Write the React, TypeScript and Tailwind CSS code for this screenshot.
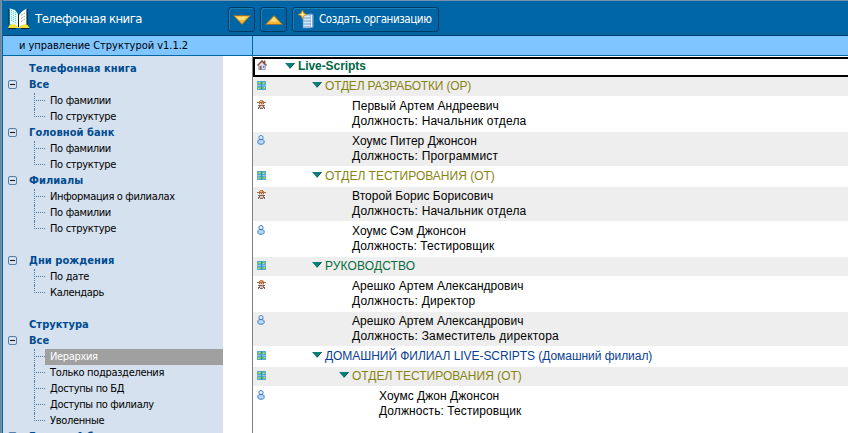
const ui = "font-['DejaVu_Sans_Condensed','DejaVu_Sans',sans-serif]";

type NavItem = { label?: string; kind: 'head' | 'group' | 'item' | 'blank'; last?: boolean; selected?: boolean };

const nav: NavItem[] = [
  { kind: 'head', label: 'Телефонная книга' },
  { kind: 'group', label: 'Все' },
  { kind: 'item', label: 'По фамилии' },
  { kind: 'item', label: 'По структуре', last: true },
  { kind: 'group', label: 'Головной банк' },
  { kind: 'item', label: 'По фамилии' },
  { kind: 'item', label: 'По структуре', last: true },
  { kind: 'group', label: 'Филиалы' },
  { kind: 'item', label: 'Информация о филиалах' },
  { kind: 'item', label: 'По фамилии' },
  { kind: 'item', label: 'По структуре', last: true },
  { kind: 'blank' },
  { kind: 'group', label: 'Дни рождения' },
  { kind: 'item', label: 'По дате' },
  { kind: 'item', label: 'Календарь', last: true },
  { kind: 'blank' },
  { kind: 'head', label: 'Структура' },
  { kind: 'group', label: 'Все' },
  { kind: 'item', label: 'Иерархия', selected: true },
  { kind: 'item', label: 'Только подразделения' },
  { kind: 'item', label: 'Доступы по БД' },
  { kind: 'item', label: 'Доступы по филиалу' },
  { kind: 'item', label: 'Уволенные', last: true },
  { kind: 'group', label: 'Головной банк' },
];

type Row =
  | { kind: 'org'; label: string; color: string; pad: string; track?: string; shade?: boolean }
  | { kind: 'person'; icon: 'boss' | 'user'; name: string; job: string; pad: string; track?: string; shade?: boolean };

const rows: Row[] = [
  { kind: 'org', label: 'ОТДЕЛ РАЗРАБОТКИ (ОР)', color: 'text-[#898410]', pad: 'pl-[59px]', track: 'tracking-[-0.18px]', shade: true },
  { kind: 'person', icon: 'boss', name: 'Первый Артем Андреевич', job: 'Начальник отдела', pad: 'pl-[99px]' },
  { kind: 'person', icon: 'user', name: 'Хоумс Питер Джонсон', job: 'Программист', pad: 'pl-[99px]', shade: true },
  { kind: 'org', label: 'ОТДЕЛ ТЕСТИРОВАНИЯ (ОТ)', color: 'text-[#898410]', pad: 'pl-[59px]' },
  { kind: 'person', icon: 'boss', name: 'Второй Борис Борисович', job: 'Начальник отдела', pad: 'pl-[99px]', shade: true },
  { kind: 'person', icon: 'user', name: 'Хоумс Сэм Джонсон', job: 'Тестировщик', pad: 'pl-[99px]', track: 'tracking-[0.08px]' },
  { kind: 'org', label: 'РУКОВОДСТВО', color: 'text-[#086c3c]', pad: 'pl-[59px]', track: 'tracking-[0.12px]', shade: true },
  { kind: 'person', icon: 'boss', name: 'Арешко Артем Александрович', job: 'Директор', pad: 'pl-[99px]' },
  { kind: 'person', icon: 'user', name: 'Арешко Артем Александрович', job: 'Заместитель директора', pad: 'pl-[99px]', shade: true },
  { kind: 'org', label: 'ДОМАШНИЙ ФИЛИАЛ LIVE-SCRIPTS (Домашний филиал)', color: 'text-[#0b4090]', pad: 'pl-[59px]', track: 'tracking-[-0.05px]' },
  { kind: 'org', label: 'ОТДЕЛ ТЕСТИРОВАНИЯ (ОТ)', color: 'text-[#898410]', pad: 'pl-[86px]', shade: true },
  { kind: 'person', icon: 'user', name: 'Хоумс Джон Джонсон', job: 'Тестировщик', pad: 'pl-[126px]', track: 'tracking-[0.08px]' },
];

function Twisty() {
  return (
    <svg width="10" height="6" viewBox="0 0 10 6" className="shrink-0">
      <path d="M0 0H10L5 5.8Z" fill="#087f7b" />
      <path d="M9.6 0.2L5 5.3" stroke="#123c38" strokeWidth="0.8" fill="none" />
    </svg>
  );
}

function House() {
  return (
    <svg width="10" height="10" viewBox="0 0 11 11">
      <path d="M2 5.5L5.5 2L9 5.5V10.5H2Z" fill="#d9e0f3" stroke="#6680b4" strokeWidth="0.8" />
      <path d="M7.5 0.5H9.2V4H7.5Z" fill="#a84830" />
      <path d="M0.5 6L5.5 1L10.5 6" stroke="#8c4a38" strokeWidth="1.5" fill="none" />
      <path d="M2 5.5L5.5 2.3" stroke="#e8966a" strokeWidth="0.8" />
      <path d="M3 6.5H5V10.5H3Z" fill="#9b5338" />
      <path d="M6.5 6.5H8V8.5H6.5Z" fill="#5574bb" />
    </svg>
  );
}

function Blocks() {
  return (
    <svg width="9" height="9" viewBox="0 0 9 9" shapeRendering="crispEdges">
      <path d="M0 0H9V9H0Z" fill="#55acd3" />
      <path d="M0 4H9V5H0Z" fill="#8bbfe5" />
      <path d="M4 0H5V9H4Z" fill="#3987cd" />
      <path d="M1 1H4V3H1ZM6 1H8V3H6ZM1 6H4V8H1ZM6 6H8V8H6Z" fill="#74cd52" />
      <path d="M2 1H3V2H2ZM6 2H7V3H6ZM1 7H2V8H1ZM7 6H8V7H7Z" fill="#c7e65c" />
    </svg>
  );
}

function Boss() {
  return (
    <svg width="9" height="9" viewBox="0 0 9 9" shapeRendering="crispEdges">
      <path d="M3 0H6V1H7V2H2V1H3Z" fill="#c97e49" />
      <path d="M3 1H5V2H3Z" fill="#efb078" />
      <path d="M0 2H9V3H0Z" fill="#b06a3d" />
      <path d="M2 3H7V5H2Z" fill="#efcdb4" />
      <path d="M2 3H3V4H2ZM4 3H5V4H4ZM6 3H7V4H6Z" fill="#74645f" />
      <path d="M1 5H8V6H1Z" fill="#7d6a62" />
      <path d="M2 6H7V8H2Z" fill="#e5c1ad" />
      <path d="M1 7H2V9H1ZM2 6H3V8H2ZM6 6H7V8H6ZM7 7H8V9H7ZM3 8H6V9H3Z" fill="#7b6863" />
    </svg>
  );
}

function User() {
  return (
    <svg width="8" height="10" viewBox="0 0 8 10">
      <path d="M4 0.6C5.5 0.6 6.1 1.5 6.1 2.6C6.1 3.7 5.5 4.5 4 4.5S1.9 3.7 1.9 2.6C1.9 1.5 2.5 0.6 4 0.6Z" fill="#e1f0ff" stroke="#3e78be" />
      <path d="M1.9 4.7H6.1C6.9 5.1 7.2 5.9 7.2 7.2C7.2 8.7 6.2 9.2 4 9.2S0.8 8.7 0.8 7.2C0.8 5.9 1.1 5.1 1.9 4.7Z" fill="#b9dcfa" stroke="#3e78be" />
    </svg>
  );
}

function Book() {
  return (
    <svg width="22" height="22" viewBox="0 0 22 22">
      <path d="M0 20L2 16H19L21.5 20Z" fill="#f1df37" />
      <path d="M0 20.5H8M13 20.5H21" stroke="#17222a" />
      <path d="M1 0.5L3 1V17L1 16Z" fill="#45d2d0" />
      <path d="M2 0.5L7 2L10 6V19L7 16.5L2 16Z" fill="#e4fff8" />
      <path d="M3.5 2V14M5.5 3V15M7.5 4V16" stroke="#55dbd2" strokeDasharray="1 1" />
      <path d="M11 7L14 3.5L18.5 0.5V16L14 17L11 19Z" fill="#fffef5" />
      <path d="M13 7.5L17 5M13 10.5L17 8M13 13.5L17 11" stroke="#9ca7aa" strokeDasharray="2 1" />
      <path d="M10.5 6V19M1 1V16.5" stroke="#10202d" fill="none" />
      <path d="M19.2 1V17" stroke="#10202d" />
    </svg>
  );
}

function OrgIcon() {
  return (
    <svg width="17" height="19" viewBox="0 0 17 19" className="shrink-0">
      <path d="M6 4.5L14 3.5L15.5 5V17L14 18H5Z" fill="#7fa9d3" />
      <path d="M5 5H13V18H5Z" fill="#d4e8f8" stroke="#5d91c5" strokeWidth="0.6" />
      <path d="M5 8H13M5 11H13M5 14H13M5 17H13" stroke="#6f9ed2" strokeWidth="1" />
      <path d="M13.5 5V17" stroke="#f0f6fd" />
      <path d="M4.5 0L6 3.2L9 4.5L6 5.8L4.5 9L3 5.8L0 4.5L3 3.2Z" fill="#ffb526" stroke="#e18218" strokeWidth="0.5" />
      <path d="M4.5 2.2L5.2 3.8L6.8 4.5L5.2 5.2L4.5 6.8L3.8 5.2L2.2 4.5L3.8 3.8Z" fill="#fff9ca" />
    </svg>
  );
}

function Arrow({ up }: { up?: boolean }) {
  return (
    <svg width="18" height="10" viewBox="0 0 18 10" className="shrink-0">
      <path d={up ? 'M0.5 9.5H17.5L9 0.5Z' : 'M0.5 0.5H17.5L9 9.5Z'} fill="#f5b533" stroke="#8b6934" strokeWidth="0.8" />
      <path d={up ? 'M9 2L13 6.5H5Z' : 'M3 1.7H15L11 5H6Z'} fill="#ffdd76" />
    </svg>
  );
}

const button = 'flex h-[25px] items-center rounded-[3px] border border-[#003b64] shadow-[inset_1px_1px_0_#1581b8]';

function NavRow({ item }: { item: NavItem }) {
  if (item.kind === 'blank') return <div className="h-4 shrink-0" />;
  if (item.kind === 'item')
    return (
      <div className="flex h-4 shrink-0 pl-[31px]">
        <div className="relative w-[11px] shrink-0">
          <div className={`w-px border-l border-dotted border-[#4f7da9] ${item.last ? 'h-2' : 'h-4'}`} />
          <div className="absolute left-0 top-[7px] w-[11px] border-t border-dotted border-[#4f7da9]" />
        </div>
        <div className={`flex-1 whitespace-nowrap pl-[5px] text-[11px] leading-4 tracking-[-0.33px] ${item.selected ? 'bg-[#a0a0a0] text-white' : 'text-black'}`}>
          {item.label}
        </div>
      </div>
    );
  return (
    <div className="flex h-4 shrink-0">
      <div className="w-[26px] shrink-0 pl-[5px] pt-[3px]">
        {item.kind === 'group' && (
          <div className="flex size-[9px] items-center justify-center rounded-[2px] border border-[#5780a8]">
            <div className="h-px w-[5px] bg-[#101820]" />
          </div>
        )}
      </div>
      <div className="whitespace-nowrap text-[11px] font-bold leading-4 tracking-[0.07px] text-[#004b91]">{item.label}</div>
    </div>
  );
}

export default function App() {
  return (
    <div className={`flex h-[433px] w-[848px] overflow-hidden bg-white ${ui}`}>
      <div className="w-[2px] shrink-0 border-l border-[#68879f] bg-[#7795ad]" />
      <div className="flex min-w-0 flex-1 flex-col border-l border-[#0066a5]">
        <header className="flex h-9 shrink-0 items-center border-b border-t border-b-[#003e68] border-t-[#7193ad] bg-[#0065a5] pl-[5px] text-white">
          <div className="mt-px w-[27px]"><Book /></div>
          <div className="mt-[2px] w-[193px] whitespace-nowrap text-[13px] leading-4 tracking-[-0.5px]">Телефонная книга</div>
          <div className="mt-[3px] flex gap-[5px]">
            <div className={`${button} w-[27px] justify-center`}><Arrow /></div>
            <div className={`${button} w-[27px] justify-center`}><Arrow up /></div>
            <div className={`${button} w-[147px] gap-[4px] whitespace-nowrap pl-[5px] text-[11.5px] tracking-[-0.42px]`}><OrgIcon />Создать организацию</div>
          </div>
        </header>
        <div className="flex h-5 shrink-0 border-b border-[#0066a5] bg-[#7fc5ff]">
          <div className="w-[250px] whitespace-nowrap border-r border-[#0066a5] pl-4 text-[11px] leading-5 tracking-[-0.03px] text-black">и управление Структурой v1.1.2</div>
        </div>
        <div className="flex min-h-0 flex-1">
          <nav className="flex w-[220px] shrink-0 flex-col overflow-hidden bg-[#d5e1ee] pt-[5px]">
            {nav.map((item, i) => <NavRow key={i} item={item} />)}
          </nav>
          <main className="ml-[29px] flex min-w-0 flex-1 flex-col border-l border-[#808080] pt-px font-['Liberation_Sans',Arial,sans-serif] text-[12px]">
            <div className="flex h-5 w-[597px] shrink-0 items-center border-2 border-black">
              <div className="mt-[-4px] w-[30px] pl-[2px]"><House /></div>
              <div className="mt-[-3px]"><Twisty /></div>
              <div className="mt-[-2px] pl-[3px] font-bold leading-4 tracking-[-0.08px] text-[#006644]">Live-Scripts</div>
            </div>
            {rows.map((row, i) => (
              <div key={i} className={`relative shrink-0 border-b border-white ${row.kind === 'org' ? 'h-5' : 'h-[35px]'} ${row.shade ? 'bg-[#eeeeee]' : ''}`}>
                <div className={`absolute left-1 ${row.kind === 'org' ? 'top-1' : 'top-[3px]'}`}>
                  {row.kind === 'org' ? <Blocks /> : row.icon === 'boss' ? <Boss /> : <User />}
                </div>
                {row.kind === 'org' ? (
                  <div className={`flex h-[18px] items-center gap-[3px] whitespace-nowrap ${row.pad} ${row.color} ${row.track ?? ''}`}>
                    <div className="mt-[-3px]"><Twisty /></div>
                    <span>{row.label}</span>
                  </div>
                ) : (
                  <div className={`whitespace-nowrap pt-[2px] leading-[15px] text-black ${row.pad}`}>
                    <div className="tracking-[0.04px]">{row.name}</div>
                    <div className={row.track ?? 'tracking-[0.2px]'}>Должность: {row.job}</div>
                  </div>
                )}
              </div>
            ))}
          </main>
        </div>
      </div>
    </div>
  );
}
